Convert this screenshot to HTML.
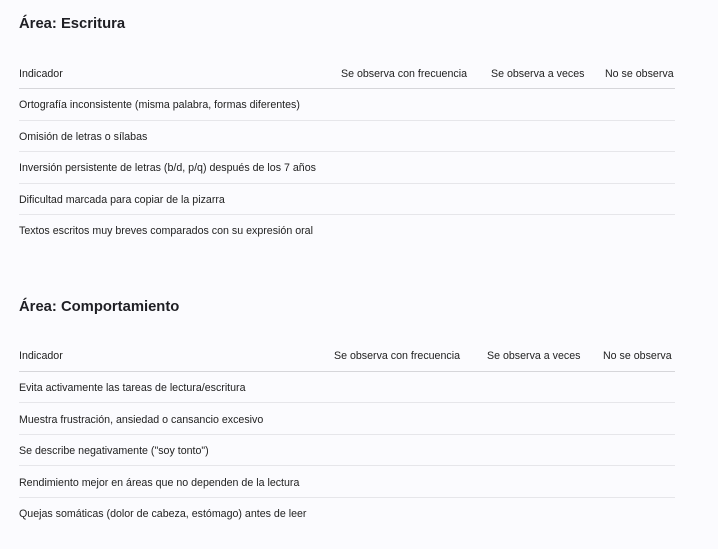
<!DOCTYPE html>
<html><head><meta charset="utf-8"><style>
html,body{margin:0;padding:0}
body{width:718px;height:549px;background:#fbfbfe;font-family:"Liberation Sans",sans-serif;color:#222;position:relative;overflow:hidden}
.h{position:absolute;left:19px;font-size:14.8px;font-weight:bold;color:#1f1f24}
.t{position:absolute;font-size:10.65px;white-space:nowrap;line-height:12px;color:#222}
.l{position:absolute;left:19px;width:656px;height:1px;background:#e6e6ea}
.l.d{background:#d6d6da}
</style></head><body>
<div class="h" style="top:16px">Área: Escritura</div>
<div class="t" style="left:19px;top:68px">Indicador</div>
<div class="t" style="left:341px;top:68px">Se observa con frecuencia</div>
<div class="t" style="left:491px;top:68px">Se observa a veces</div>
<div class="t" style="left:605px;top:68px">No se observa</div>
<div class="l d" style="top:88px"></div>
<div class="t" style="left:19px;top:99px">Ortografía inconsistente (misma palabra, formas diferentes)</div>
<div class="l" style="top:120px"></div>
<div class="t" style="left:19px;top:131px">Omisión de letras o sílabas</div>
<div class="l" style="top:151px"></div>
<div class="t" style="left:19px;top:162px">Inversión persistente de letras (b/d, p/q) después de los 7 años</div>
<div class="l" style="top:183px"></div>
<div class="t" style="left:19px;top:194px">Dificultad marcada para copiar de la pizarra</div>
<div class="l" style="top:214px"></div>
<div class="t" style="left:19px;top:225px">Textos escritos muy breves comparados con su expresión oral</div>

<div class="h" style="top:299px">Área: Comportamiento</div>
<div class="t" style="left:19px;top:350px">Indicador</div>
<div class="t" style="left:334px;top:350px">Se observa con frecuencia</div>
<div class="t" style="left:487px;top:350px">Se observa a veces</div>
<div class="t" style="left:603px;top:350px">No se observa</div>
<div class="l d" style="top:371px"></div>
<div class="t" style="left:19px;top:382px">Evita activamente las tareas de lectura/escritura</div>
<div class="l" style="top:402px"></div>
<div class="t" style="left:19px;top:414px">Muestra frustración, ansiedad o cansancio excesivo</div>
<div class="l" style="top:434px"></div>
<div class="t" style="left:19px;top:445px">Se describe negativamente ("soy tonto")</div>
<div class="l" style="top:465px"></div>
<div class="t" style="left:19px;top:477px">Rendimiento mejor en áreas que no dependen de la lectura</div>
<div class="l" style="top:497px"></div>
<div class="t" style="left:19px;top:508px">Quejas somáticas (dolor de cabeza, estómago) antes de leer</div>
</body></html>
